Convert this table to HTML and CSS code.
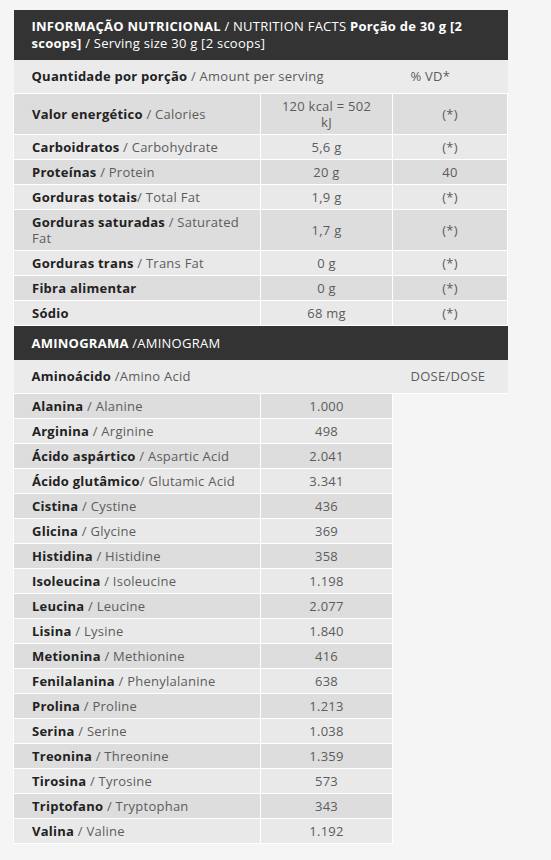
FILE: index.html
```html
<!DOCTYPE html>
<html lang="pt">
<head>
<meta charset="utf-8">
<title>Informação Nutricional</title>
<link rel="stylesheet" href="styles.css">
</head>
<body>
<table class="nt">
  <colgroup><col class="c1"><col class="c2"><col class="c3"></colgroup>
  <tr class="head"><td colspan="3"><b>INFORMAÇÃO NUTRICIONAL</b> / NUTRITION FACTS <b>Porção de 30 g [2 scoops]</b> / Serving size 30 g [2 scoops]</td></tr>
  <tr class="sub"><td colspan="2"><b>Quantidade por porção</b> / Amount per serving</td><td class="l">% VD*</td></tr>
  <tr class="tall"><td><b>Valor energético</b> / Calories</td><td>120 kcal = 502 kJ</td><td>(*)</td></tr>
  <tr><td><b>Carboidratos</b> / Carbohydrate</td><td>5,6 g</td><td>(*)</td></tr>
  <tr><td><b>Proteínas</b> / Protein</td><td>20 g</td><td>40</td></tr>
  <tr><td><b>Gorduras totais</b>/ Total Fat</td><td>1,9 g</td><td>(*)</td></tr>
  <tr><td><b>Gorduras saturadas</b> / Saturated Fat</td><td>1,7 g</td><td>(*)</td></tr>
  <tr><td><b>Gorduras trans</b> / Trans Fat</td><td>0 g</td><td>(*)</td></tr>
  <tr><td><b>Fibra alimentar</b></td><td>0 g</td><td>(*)</td></tr>
  <tr><td><b>Sódio</b></td><td>68 mg</td><td>(*)</td></tr>
  <tr class="head amino"><td colspan="3"><b>AMINOGRAMA</b> /AMINOGRAM</td></tr>
  <tr class="sub"><td colspan="2"><b>Aminoácido</b> /Amino Acid</td><td class="l">DOSE/DOSE</td></tr>
  <tr><td><b>Alanina</b> / Alanine</td><td>1.000</td></tr>
  <tr><td><b>Arginina</b> / Arginine</td><td>498</td></tr>
  <tr><td><b>Ácido aspártico</b> / Aspartic Acid</td><td>2.041</td></tr>
  <tr><td><b>Ácido glutâmico</b>/ Glutamic Acid</td><td>3.341</td></tr>
  <tr><td><b>Cistina</b> / Cystine</td><td>436</td></tr>
  <tr><td><b>Glicina</b> / Glycine</td><td>369</td></tr>
  <tr><td><b>Histidina</b> / Histidine</td><td>358</td></tr>
  <tr><td><b>Isoleucina</b> / Isoleucine</td><td>1.198</td></tr>
  <tr><td><b>Leucina</b> / Leucine</td><td>2.077</td></tr>
  <tr><td><b>Lisina</b> / Lysine</td><td>1.840</td></tr>
  <tr><td><b>Metionina</b> / Methionine</td><td>416</td></tr>
  <tr><td><b>Fenilalanina</b> / Phenylalanine</td><td>638</td></tr>
  <tr><td><b>Prolina</b> / Proline</td><td>1.213</td></tr>
  <tr><td><b>Serina</b> / Serine</td><td>1.038</td></tr>
  <tr><td><b>Treonina</b> / Threonine</td><td>1.359</td></tr>
  <tr><td><b>Tirosina</b> / Tyrosine</td><td>573</td></tr>
  <tr><td><b>Triptofano</b> / Tryptophan</td><td>343</td></tr>
  <tr><td><b>Valina</b> / Valine</td><td>1.192</td></tr>
</table>
</body>
</html>
```
FILE: styles.css
```css
html, body {
  margin: 0;
  padding: 0;
  background: #f5f5f5;
}
body {
  padding: 10px 0 0 13px;
  font-family: "Open Sans", "Liberation Sans", sans-serif;
  font-size: 13px;
  letter-spacing: 0.25px;
  color: #5c5c5c;
}
.nt {
  border-collapse: collapse;
  table-layout: fixed;
  width: 494px;
}
.c1 { width: 247px; }
.c2 { width: 132px; }
.c3 { width: 115px; }
.nt td {
  border: 1px solid #fff;
  padding: 4px 18px;
  line-height: 16px;
  text-align: center;
  background: #e9e9e9;
}
.nt td:first-child { text-align: left; }
.nt b { color: #222; font-weight: 700; }
.nt tr:nth-child(odd) td { background: #dddddd; }
.nt tr.head td {
  background: #333333;
  color: #fff;
  border: 0;
  padding: 8px 18px;
  line-height: 17px;
}
.nt tr.head.amino td { padding: 9px 18px 8px; }
.nt tr.head b { color: #fff; }
.nt tr.sub td {
  background: #ebebeb;
  border-left: 0;
  border-right: 0;
  border-top: 0;
  padding: 8px 18px;
  line-height: 17px;
}
.nt tr.sub td.l { text-align: left; }
```
